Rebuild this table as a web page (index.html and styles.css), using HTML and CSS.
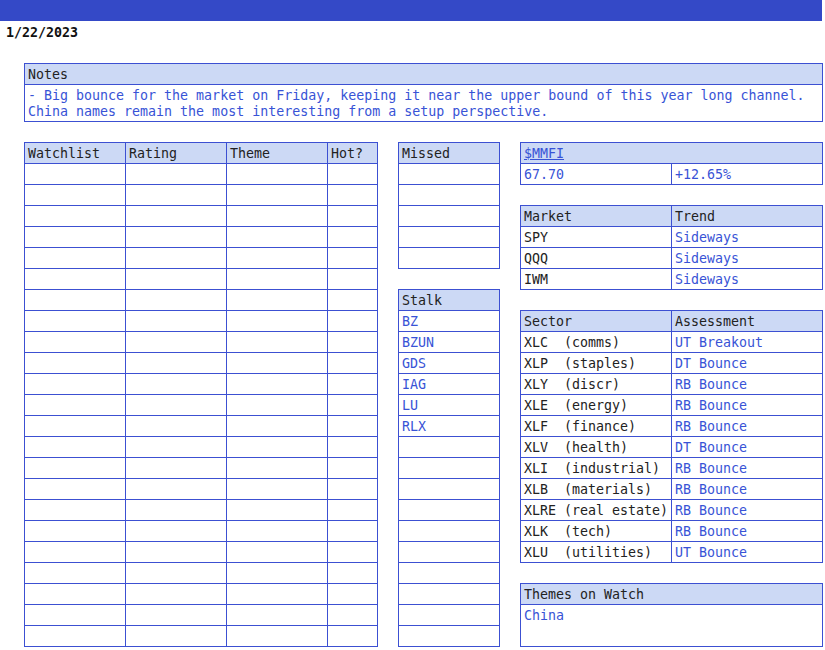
FILE: index.html
```html
<!DOCTYPE html>
<html>
<head>
<meta charset="utf-8">
<link rel="stylesheet" href="styles.css">
</head>
<body>
<div class="topbar"></div>
<div class="date">1/22/2023</div>
<div class="page">
  <div class="notes">
    <div class="hd">Notes</div>
    <div class="notes-body">- Big bounce for the market on Friday, keeping it near the upper bound of this year long channel.<br>China names remain the most interesting from a setup perspective.</div>
  </div>
  <div class="boards">
    <div class="sheet watch">
      <div class="hd">Watchlist</div><div class="hd">Rating</div><div class="hd">Theme</div><div class="hd">Hot?</div>
      <div></div><div></div><div></div><div></div>
      <div></div><div></div><div></div><div></div>
      <div></div><div></div><div></div><div></div>
      <div></div><div></div><div></div><div></div>
      <div></div><div></div><div></div><div></div>
      <div></div><div></div><div></div><div></div>
      <div></div><div></div><div></div><div></div>
      <div></div><div></div><div></div><div></div>
      <div></div><div></div><div></div><div></div>
      <div></div><div></div><div></div><div></div>
      <div></div><div></div><div></div><div></div>
      <div></div><div></div><div></div><div></div>
      <div></div><div></div><div></div><div></div>
      <div></div><div></div><div></div><div></div>
      <div></div><div></div><div></div><div></div>
      <div></div><div></div><div></div><div></div>
      <div></div><div></div><div></div><div></div>
      <div></div><div></div><div></div><div></div>
      <div></div><div></div><div></div><div></div>
      <div></div><div></div><div></div><div></div>
      <div></div><div></div><div></div><div></div>
      <div></div><div></div><div></div><div></div>
      <div></div><div></div><div></div><div></div>
    </div>
    <div class="col mid">
      <div class="sheet single">
        <div class="hd">Missed</div>
        <div></div><div></div><div></div><div></div><div></div>
      </div>
      <div class="sheet single">
        <div class="hd">Stalk</div>
        <div class="v">BZ</div><div class="v">BZUN</div><div class="v">GDS</div><div class="v">IAG</div><div class="v">LU</div><div class="v">RLX</div>
        <div></div><div></div><div></div><div></div><div></div><div></div><div></div><div></div><div></div><div></div>
      </div>
    </div>
    <div class="col right">
      <div class="sheet pair">
        <div class="hd span"><a href="#" class="link">$MMFI</a></div>
        <div class="v">67.70</div><div class="v">+12.65%</div>
      </div>
      <div class="sheet pair">
        <div class="hd">Market</div><div class="hd">Trend</div>
        <div>SPY</div><div class="v">Sideways</div>
        <div>QQQ</div><div class="v">Sideways</div>
        <div>IWM</div><div class="v">Sideways</div>
      </div>
      <div class="sheet pair">
        <div class="hd">Sector</div><div class="hd">Assessment</div>
        <div>XLC  (comms)</div><div class="v">UT Breakout</div>
        <div>XLP  (staples)</div><div class="v">DT Bounce</div>
        <div>XLY  (discr)</div><div class="v">RB Bounce</div>
        <div>XLE  (energy)</div><div class="v">RB Bounce</div>
        <div>XLF  (finance)</div><div class="v">RB Bounce</div>
        <div>XLV  (health)</div><div class="v">DT Bounce</div>
        <div>XLI  (industrial)</div><div class="v">RB Bounce</div>
        <div>XLB  (materials)</div><div class="v">RB Bounce</div>
        <div>XLRE (real estate)</div><div class="v">RB Bounce</div>
        <div>XLK  (tech)</div><div class="v">RB Bounce</div>
        <div>XLU  (utilities)</div><div class="v">UT Bounce</div>
      </div>
      <div class="sheet pair">
        <div class="hd span">Themes on Watch</div>
        <div class="v span tall">China</div>
      </div>
    </div>
  </div>
</div>
</body>
</html>
```
FILE: styles.css
```css
html, body {
  margin: 0;
  padding: 0;
  background: #ffffff;
}
body {
  font-family: "DejaVu Sans Mono", "Liberation Mono", monospace;
  font-size: 13.3px;
  color: #222222;
}
.topbar {
  width: 822px;
  height: 21px;
  background: #3449c7;
}
.date {
  height: 21px;
  line-height: 23px;
  padding-left: 6px;
  font-weight: bold;
  color: #111111;
}
.page {
  padding: 21px 0 0 24px;
  display: flex;
  flex-direction: column;
  gap: 20px;
}
.notes {
  border: 1px solid #3c50d2;
  border-bottom: none;
  box-sizing: border-box;
  width: 799px;
}
.notes .hd {
  height: 21px;
  line-height: 21px;
  padding: 0 3px;
  background: #ccd9f5;
  border-bottom: 1px solid #3c50d2;
  box-sizing: border-box;
  overflow: hidden;
}
.notes-body {
  height: 37px;
  box-sizing: border-box;
  padding: 3px 3px 0;
  line-height: 16px;
  color: #3853d6;
  border-bottom: 1px solid #3c50d2;
}
.boards {
  display: flex;
  align-items: flex-start;
  gap: 20px;
}
.col {
  display: flex;
  flex-direction: column;
  gap: 20px;
}
.sheet {
  display: grid;
  border-left: 1px solid #3c50d2;
  border-top: 1px solid #3c50d2;
}
.sheet > div {
  height: 21px;
  box-sizing: border-box;
  border-right: 1px solid #3c50d2;
  border-bottom: 1px solid #3c50d2;
  padding: 0 3px;
  line-height: 21px;
  white-space: pre;
  overflow: hidden;
}
.sheet > .hd {
  background: #ccd9f5;
}
.sheet > .v {
  color: #3853d6;
}
.sheet > .span {
  grid-column: 1 / -1;
}
.sheet > .tall {
  height: 42px;
}
.watch {
  grid-template-columns: 101px 101px 101px 50px;
}
.single {
  grid-template-columns: 101px;
}
.pair {
  grid-template-columns: 151px 151px;
}
.link {
  color: #3853d6;
  text-decoration: underline;
}
```
